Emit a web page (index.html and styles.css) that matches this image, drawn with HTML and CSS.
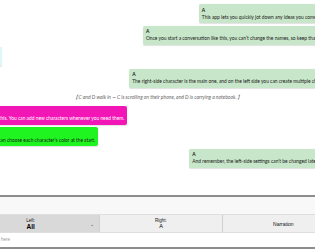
FILE: index.html
```html
<!DOCTYPE html>
<html lang="en">
<head>
  <meta charset="UTF-8" />
  <meta name="viewport" content="width=device-width, initial-scale=1.0" />
  <title>Chat Notes</title>
  <link rel="stylesheet" href="styles.css">
</head>
<body>
  <div class="app">
    <div class="chat">
      <div class="msg right">
        <div class="bubble me"><b class="name">A</b><p>This app lets you quickly jot down any ideas you come up with.</p></div>
      </div>
      <div class="msg right">
        <div class="bubble me"><b class="name">A</b><p>Once you start a conversation like this, you can’t change the names, so keep that in mind.</p></div>
      </div>
      <div class="msg left">
        <div class="bubble blue"><b class="name">B</b><p>Hey!</p></div>
      </div>
      <div class="msg right">
        <div class="bubble me"><b class="name">A</b><p>The right-side character is the main one, and on the left side you can create multiple characters.</p></div>
      </div>
      <div class="narration">【C and D walk in — C is scrolling on their phone, and D is carrying a notebook.】</div>
      <div class="msg left">
        <div class="bubble pink"><b class="name">C</b><p>Like this. You can add new characters whenever you need them.</p></div>
      </div>
      <div class="msg left">
        <div class="bubble lime"><b class="name">D</b><p>You can choose each character’s color at the start.</p></div>
      </div>
      <div class="msg right">
        <div class="bubble me"><b class="name">A</b><p>And remember, the left-side settings can’t be changed later on, too.</p></div>
      </div>
    </div>

    <div class="footer">
      <div class="strip"></div>
      <div class="tabs">
        <div class="tab active">
          <span class="lbl">Left:</span>
          <span class="val">All</span>
          <span class="chev">⌄</span>
        </div>
        <div class="tab">
          <span class="lbl">Right:</span>
          <span class="val small">A</span>
        </div>
        <div class="tab">
          <span class="plain">Narration</span>
        </div>
      </div>
      <div class="input">Type here</div>
    </div>
  </div>
</body>
</html>
```

FILE: styles.css
```css
html, body {
  margin: 0;
  padding: 0;
  overflow: hidden;
  background: white;
}
.app {
  width: 375px;
  height: 250px;
  margin-left: -30px;
  display: flex;
  flex-direction: column;
  font-family: Lato, "Noto Sans", sans-serif;
}
.chat {
  flex: 1;
  overflow: hidden;
  padding-top: 4px;
}
.msg {
  display: flex;
  margin-bottom: 2.5px;
}
.msg.right {
  justify-content: flex-end;
  padding-right: 7px;
}
.msg.left {
  justify-content: flex-start;
  padding-left: 16px;
}
.bubble {
  padding: 2.5px 3px;
  border-radius: 2px;
  font-size: 4.87px;
  line-height: 7px;
  color: #1a1a1a;
  white-space: nowrap;
  box-shadow: 0 0.5px 1px rgba(0, 0, 0, 0.12);
}
.bubble p {
  margin: 0;
}
.name {
  display: block;
  font-weight: bold;
}
.me {
  background: #c8e6c9;
}
.blue {
  background: #e0f7fa;
}
.pink {
  background: #f316b6;
  color: white;
}
.lime {
  background: #1ff421;
}
.narration {
  text-align: center;
  font-size: 5px;
  line-height: 7px;
  font-style: italic;
  color: #666;
  padding: 3.5px 0 5px;
}
.footer {
  margin-bottom: 1px;
  border-top: 2px solid #8c8c8c;
  border-bottom: 2px solid #8c8c8c;
  font-family: "Liberation Sans", Arial, sans-serif;
}
.strip {
  height: 17px;
  background: #f8f8f8;
}
.tabs {
  display: flex;
  height: 19px;
  border-top: 1px solid #dedede;
  border-bottom: 1px solid #dedede;
  box-sizing: border-box;
}
.tab {
  flex: 1;
  position: relative;
  display: flex;
  flex-direction: column;
  align-items: center;
  justify-content: center;
  background: #efefef;
  border-right: 1px solid #d0d0d0;
  color: #111;
}
.tab.active {
  background: #d9d9d9;
  padding-right: 8px;
}
.lbl {
  font-size: 4.5px;
  line-height: 5px;
}
.val {
  font-size: 6.5px;
  line-height: 7px;
  font-weight: bold;
  color: #000;
}
.val.small {
  font-size: 5.5px;
  font-weight: normal;
}
.plain {
  font-size: 5px;
}
.chev {
  position: absolute;
  right: 5px;
  top: 7px;
  font-size: 5px;
  line-height: 5px;
  color: #444;
}
.input {
  height: 14px;
  line-height: 14px;
  padding-left: 20px;
  font-size: 4.5px;
  color: #999;
}
```
